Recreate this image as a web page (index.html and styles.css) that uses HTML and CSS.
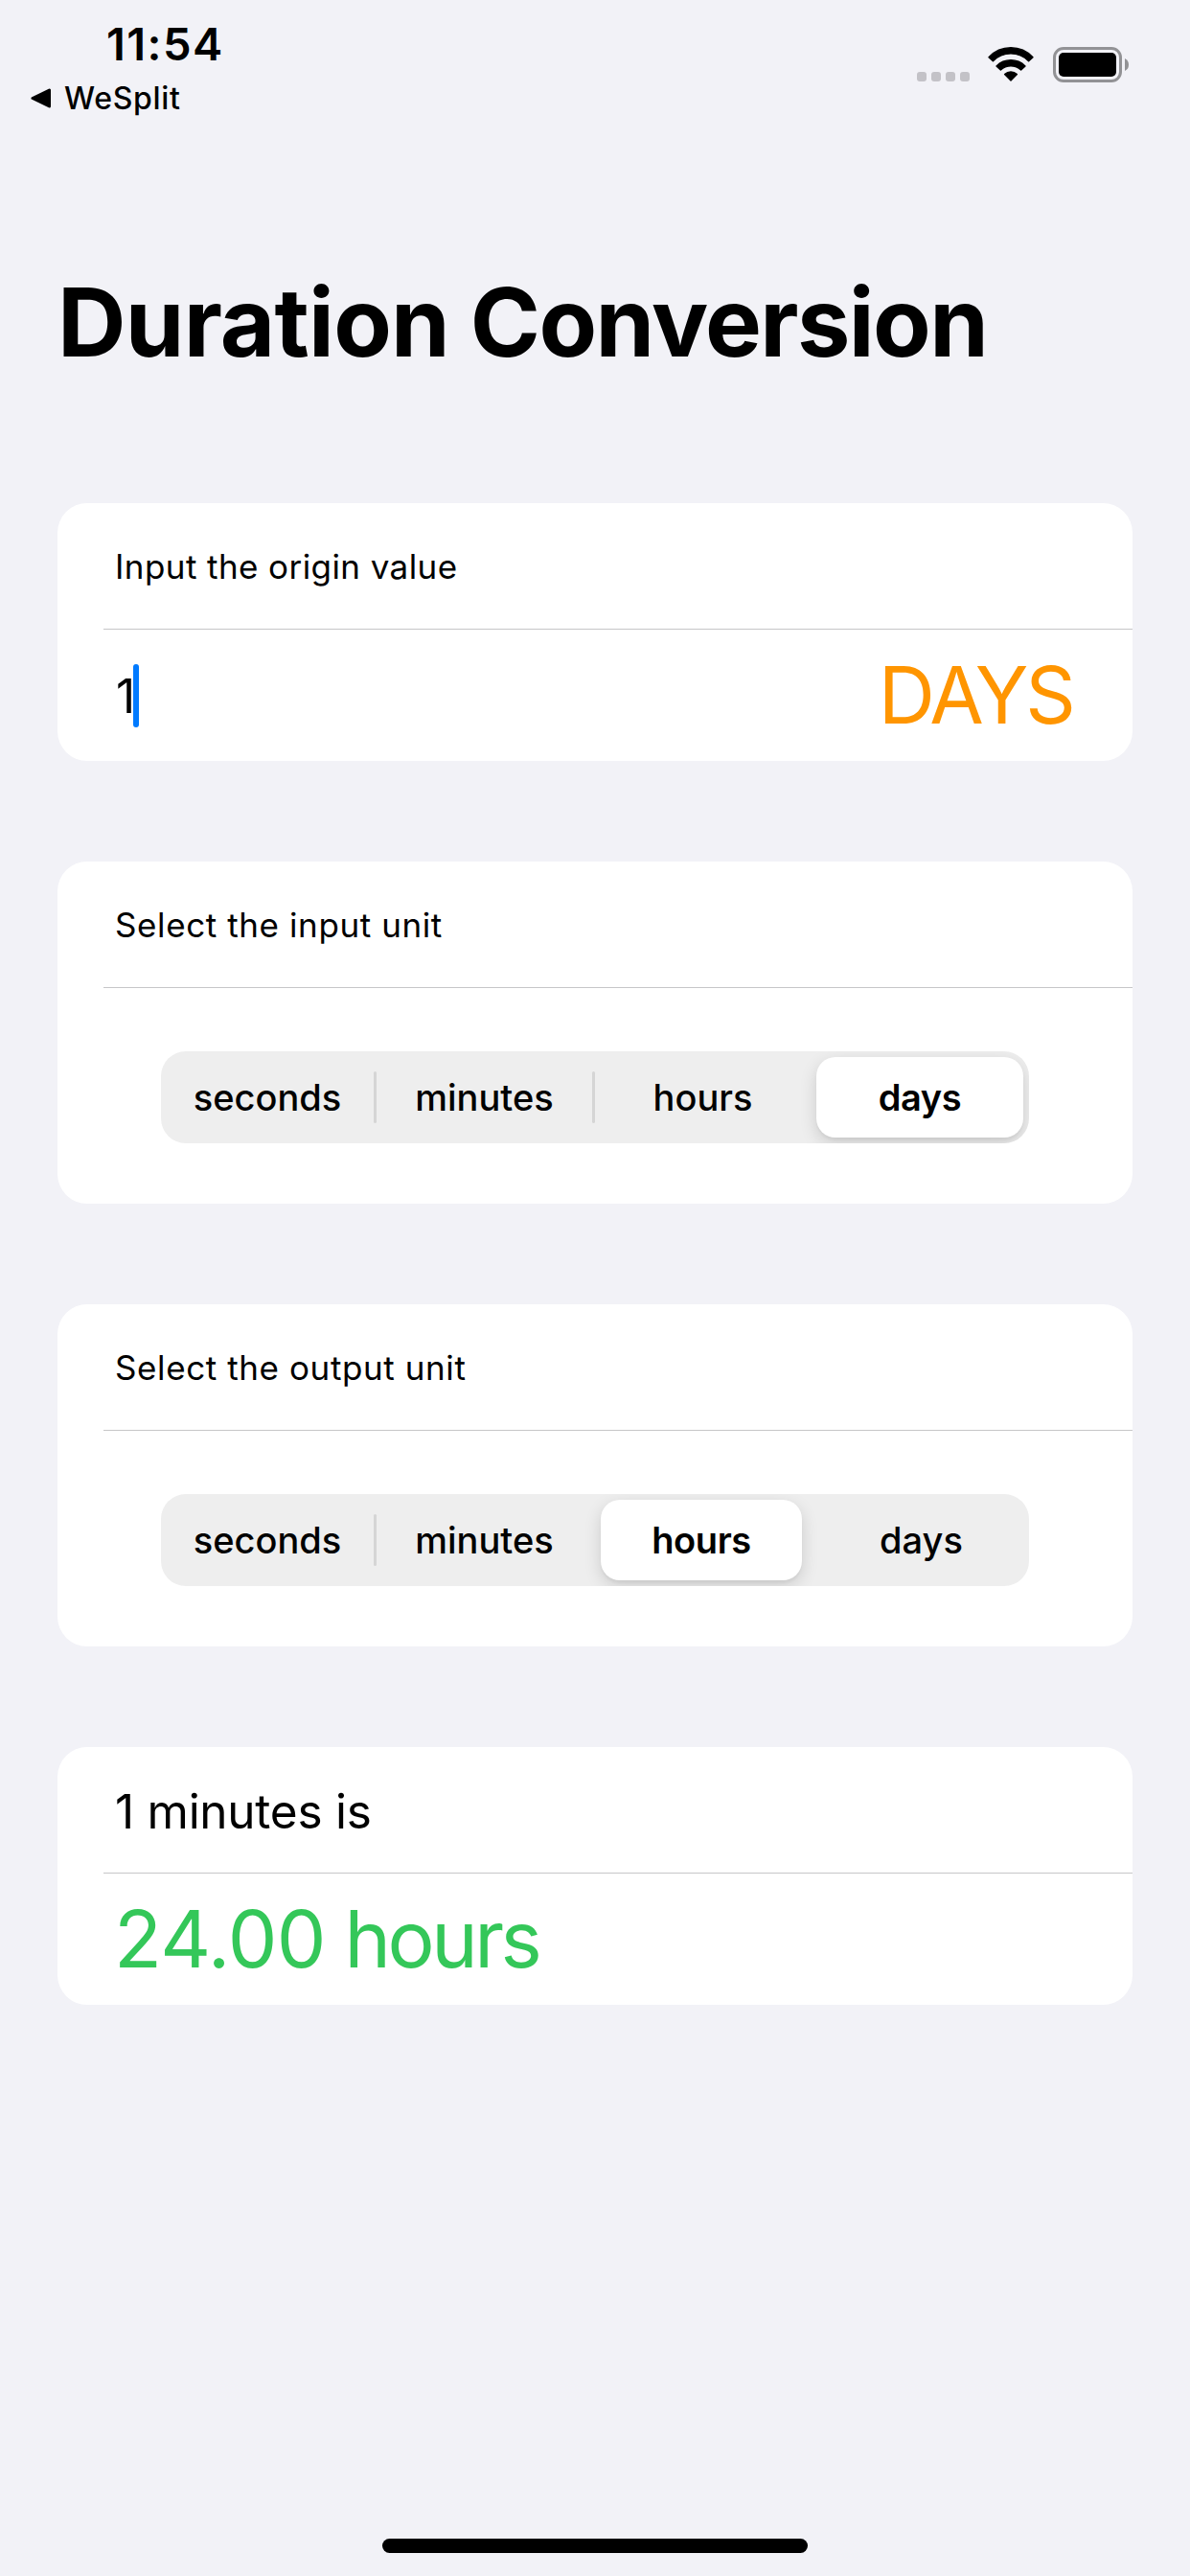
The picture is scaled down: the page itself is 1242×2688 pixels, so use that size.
FILE: index.html
```html
<!DOCTYPE html>
<html lang="en">
<head>
<meta charset="utf-8">
<title>Duration Conversion</title>
<link rel="stylesheet" href="styles.css">
</head>
<body>
<div class="screen">
  <header class="status">
    <div class="status-left">
      <div class="time">11:54</div>
      <div class="back">
        <svg class="back-arrow" width="21" height="21" viewBox="0 0 21 21"><path d="M2 10.5 19.5 2v17z" stroke="#000" stroke-width="3" stroke-linejoin="round"/></svg>
        <span>WeSplit</span>
      </div>
    </div>
    <div class="status-icons">
      <div class="signal"><i></i><i></i><i></i><i></i></div>
      <svg class="wifi" width="48" height="36" viewBox="0 0 48 36">
        <g stroke="#000" stroke-width="1.4" stroke-linejoin="round">
          <path d="M1 10.8A31.4 31.4 0 0 1 47 10.8L42.6 14.8A25.8 25.8 0 0 0 5.4 14.8Z"/>
          <path d="M9 19.9A21.4 21.4 0 0 1 39 19.9L34.6 24A15.8 15.8 0 0 0 13.4 24Z"/>
          <path d="M17.6 28.5A9.6 9.6 0 0 1 30.4 28.5L24 34.9Z"/>
        </g>
      </svg>
      <svg class="battery" width="79" height="37" viewBox="0 0 79 37">
        <rect x="1.5" y="1.5" width="69" height="34" rx="9.5" fill="none" stroke="#929295" stroke-width="3"/>
        <rect x="6" y="6" width="60" height="25" rx="5"/>
        <path d="M75 12Q79 14 79 18.5T75 25Z" fill="#929295"/>
      </svg>
    </div>
  </header>

  <h1 class="title"><span class="title-lead">Duration</span> Conversion</h1>

  <main class="form">
    <section class="card">
      <div class="row label">Input the origin value</div>
      <div class="row value-row">
        <div class="field"><span>1</span><span class="caret"></span></div>
        <div class="unit">DAYS</div>
      </div>
    </section>

    <section class="card">
      <div class="row label picker-label">Select the input unit</div>
      <div class="row picker-row">
        <div class="segmented">
          <span class="segment">seconds</span><i class="separator"></i>
          <span class="segment">minutes</span><i class="separator"></i>
          <span class="segment">hours</span><i></i>
          <span class="segment selected last">days</span>
        </div>
      </div>
    </section>

    <section class="card">
      <div class="row label picker-label">Select the output unit</div>
      <div class="row picker-row">
        <div class="segmented">
          <span class="segment">seconds</span><i class="separator"></i>
          <span class="segment">minutes</span><i></i>
          <span class="segment selected">hours</span><i></i>
          <span class="segment">days</span>
        </div>
      </div>
    </section>

    <section class="card">
      <div class="row summary">1 minutes is</div>
      <div class="row value-row result"><div><span class="amount">24.00</span> hours</div></div>
    </section>
  </main>

  <div class="home-indicator"></div>
</div>
</body>
</html>
```
FILE: styles.css
```css
* {
  box-sizing: border-box;
}

body {
  margin: 0;
  background: #f2f2f7;
  color: #000;
  font-family: Inter, "Liberation Sans", sans-serif;
}

.screen {
  display: flex;
  flex-direction: column;
  width: 1242px;
  height: 2688px;
}

/* Status bar */
.status {
  display: flex;
  justify-content: space-between;
  height: 132px;
  padding: 20px 64px 0 32px;
}

.time {
  height: 52px;
  padding-left: 79px;
  font-size: 47px;
  font-weight: 600;
  line-height: 52px;
  letter-spacing: 1.4px;
}

.back {
  display: flex;
  align-items: center;
  gap: 14px;
  height: 61px;
  font-size: 32px;
  font-weight: 500;
  letter-spacing: 0.69px;
}

.status-icons {
  display: flex;
  align-items: flex-end;
  height: 66px;
}

.signal {
  display: flex;
  gap: 5px;
  margin: 0 19px 1px 0;
}

.signal i {
  width: 10px;
  height: 10px;
  border-radius: 3px;
  background: #c3c2c7;
}

.wifi {
  margin: 0 20px 1px 0;
}

/* Title */
.title {
  height: 120px;
  margin: 144px 60px 129px;
  font-size: 99px;
  font-weight: 700;
  line-height: 120px;
  letter-spacing: -1.6px;
}

.title-lead {
  letter-spacing: -0.75px;
}

/* Grouped cards */
.form {
  display: flex;
  flex-direction: column;
  gap: 105px;
  padding: 0 60px;
}

.card {
  border-radius: 31px;
  background: #fff;
  overflow: hidden;
}

.row {
  display: flex;
  align-items: center;
}

.label,
.summary {
  height: 131px;
  padding: 2px 0 0 60px;
}

.label {
  padding-top: 0;
  font-size: 35px;
  letter-spacing: 0.42px;
}

.picker-label {
  letter-spacing: 0.6px;
}

.summary {
  font-size: 49.5px;
  letter-spacing: -0.26px;
}

.value-row,
.picker-row {
  margin-left: 48px;
  border-top: 1px solid #c6c6c8;
}

.value-row {
  justify-content: space-between;
  height: 138px;
  padding: 0 62px 0 13px;
}

.field {
  display: flex;
  align-items: center;
  font-size: 49.5px;
}

.field span:first-child {
  width: 18px;
}

.caret {
  width: 6px;
  height: 66px;
  border-radius: 3px;
  background: #007aff;
}

.unit {
  color: #ff9500;
  font-size: 82px;
  letter-spacing: -2.99px;
}

.result {
  padding-left: 11px;
  color: #34c759;
  font-size: 82px;
  letter-spacing: -3.5px;
}

.amount {
  letter-spacing: -0.6px;
}

/* Segmented control */
.picker-row {
  height: 226px;
  padding: 66px 108px 63px 60px;
}

.segmented {
  display: grid;
  grid-template-columns: 222px 3px 225px 3px 225px 3px 225px;
  align-items: center;
  height: 96px;
  border-radius: 26px;
  background: #eee;
  font-size: 38px;
  font-weight: 450;
  overflow: hidden;
}

.segment {
  display: flex;
  align-items: center;
  justify-content: center;
  height: 84px;
}

.separator {
  height: 54px;
  border-radius: 2px;
  background: #d5d5d5;
}

.selected {
  margin: 0 9px 0 6px;
  border-radius: 20px;
  background: #fff;
  box-shadow: 0 6px 18px rgba(0, 0, 0, 0.14), 0 3px 3px rgba(0, 0, 0, 0.04);
  font-weight: 600;
  letter-spacing: -0.4px;
}

.selected.last {
  margin: 0 6px 0 3px;
}

/* Home indicator */
.home-indicator {
  width: 444px;
  height: 15px;
  margin: auto auto 24px;
  border-radius: 8px;
  background: #000;
}
```
